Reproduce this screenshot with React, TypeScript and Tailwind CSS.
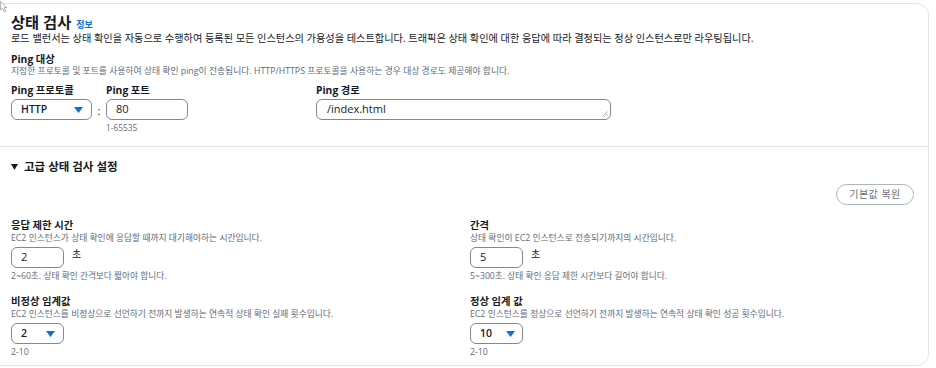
import React from "react";

const font = { fontFamily: '"Open Sans", "Noto Sans CJK KR", sans-serif' };

function Tri() {
  return (
    <svg width="9" height="6" viewBox="0 0 9 6" className="shrink-0">
      <path d="M0 0 H9 L4.5 6 Z" fill="#0972d3" />
    </svg>
  );
}

function Select({ value, w, gap }: { value: string; w: string; gap: string }) {
  return (
    <div className={`flex items-center h-[21px] ${w} rounded-[6px] border border-[#7d8998] pl-[9px] bg-white`}>
      <span className={`text-[10.5px] font-semibold text-[#16191f] ${gap}`}>{value}</span>
      <Tri />
    </div>
  );
}

function Field({
  label,
  desc,
  children,
  help,
}: {
  label: string;
  desc: string;
  children: React.ReactNode;
  help: string;
}) {
  return (
    <div className="flex flex-col">
      <div className="text-[10.3px] leading-[14px] font-bold text-[#16191f]">{label}</div>
      <div className="text-[8.75px] leading-[12px] text-[#5f6b7a]">{desc}</div>
      <div className="mt-[3px]">{children}</div>
      <div className="mt-[2px] text-[8.7px] leading-[12px] text-[#5f6b7a]">{help}</div>
    </div>
  );
}

function NumInput({ value }: { value: string }) {
  return (
    <div className="flex items-center gap-[8px]">
      <div className="flex items-center h-[21px] w-[53px] rounded-[6px] border border-[#7d8998] pl-[9px] bg-white text-[11px] text-[#16191f]">
        {value}
      </div>
      <span className="text-[10px] text-[#16191f] -mt-[6px]">초</span>
    </div>
  );
}

export default function App() {
  return (
    <div className="relative w-[936px] h-[368px] bg-white overflow-hidden" style={font}>
      <svg className="absolute left-0 top-[1px]" width="9" height="12" viewBox="0 0 9 12">
        <path d="M0.5 0.5 L0.5 9 L2.5 7 L4.5 11 L6 10.3 L4 6.5 L7 6.5 Z" fill="white" stroke="#9aa0a6" strokeWidth="0.8" />
      </svg>
      <div className="pt-[3px] pr-[7px]">
        <div className="ml-[-12px] h-[363px] rounded-[12px] border border-[#e3e6e8] bg-white flex flex-col">
          {/* section 1 */}
          <div className="pl-[22px] pr-[14px] pt-[9px] h-[143px] border-b border-[#e3e6e8]">
            <div className="flex items-baseline gap-[5px] h-[18px] leading-[18px]">
              <span className="text-[15.3px] font-bold text-[#16191f]">상태 검사</span>
              <span className="text-[9px] font-bold text-[#0972d3]">정보</span>
            </div>
            <div className="mt-0 text-[10.2px] leading-[14px] text-[#16191f]">
              로드 밸런서는 상태 확인을 자동으로 수행하여 등록된 모든 인스턴스의 가용성을 테스트합니다. 트래픽은 상태 확인에 대한 응답에 따라 결정되는 정상 인스턴스로만 라우팅됩니다.
            </div>
            <div className="mt-[7px] text-[10.3px] leading-[14px] font-bold text-[#16191f]">Ping 대상</div>
            <div className="text-[8.8px] leading-[11px] text-[#5f6b7a]">
              지정한 프로토콜 및 포트를 사용하여 상태 확인 ping이 전송됩니다. HTTP/HTTPS 프로토콜을 사용하는 경우 대상 경로도 제공해야 합니다.
            </div>
            <div className="mt-[6px] flex items-start">
              <div className="flex flex-col w-[81px]">
                <div className="text-[10.3px] leading-[14px] font-bold text-[#16191f]">Ping 프로토콜</div>
                <div className="mt-[2px]">
                  <Select value="HTTP" w="w-[81px]" gap="w-[53px]" />
                </div>
              </div>
              <div className="w-[14px] pt-[20px] text-center text-[11px] text-[#16191f]">:</div>
              <div className="flex flex-col w-[210px]">
                <div className="text-[10.3px] leading-[14px] font-bold text-[#16191f]">Ping 포트</div>
                <div className="mt-[2px] flex items-center h-[21px] w-[82px] rounded-[6px] border border-[#7d8998] pl-[9px] text-[11px] text-[#16191f]">
                  80
                </div>
                <div className="mt-[2px] text-[8.3px] leading-[12px] text-[#5f6b7a]">1-65535</div>
              </div>
              <div className="flex flex-col">
                <div className="text-[10.3px] leading-[14px] font-bold text-[#16191f]">Ping 경로</div>
                <div className="relative mt-[2px] flex items-center h-[21px] w-[295px] rounded-[6px] border border-[#7d8998] pl-[10px] text-[11px] text-[#16191f]">
                  /index.html
                  <svg className="absolute right-[2px] bottom-[2px]" width="6" height="6" viewBox="0 0 6 6">
                    <path d="M5.5 0.5 L0.5 5.5 M5.5 3 L3 5.5" stroke="#9aa0a6" strokeWidth="0.8" />
                  </svg>
                </div>
              </div>
            </div>
          </div>
          {/* section 2 */}
          <div className="pl-[22px] pr-[14px] pt-[12px]">
            <div className="flex items-center gap-[6px] h-[16px]">
              <svg width="7" height="6" viewBox="0 0 7 6">
                <path d="M0 0 H7 L3.5 6 Z" fill="#16191f" />
              </svg>
              <span className="text-[11.5px] font-bold text-[#16191f]">고급 상태 검사 설정</span>
            </div>
            <div className="flex justify-end mt-[9px]">
              <div className="h-[21px] w-[78px] rounded-full border border-[#aab7b8] flex items-center justify-center text-[10px] tracking-[0.5px] text-[#687078]">
                기본값 복원
              </div>
            </div>
            <div className="mt-[13px] grid grid-cols-[459px_1fr] gap-y-[12px]">
              <Field label="응답 제한 시간" desc="EC2 인스턴스가 상태 확인에 응답할 때까지 대기해야하는 시간입니다." help="2~60초. 상태 확인 간격보다 짧아야 합니다.">
                <NumInput value="2" />
              </Field>
              <Field label="간격" desc="상태 확인이 EC2 인스턴스로 전송되기까지의 시간입니다." help="5~300초. 상태 확인 응답 제한 시간보다 길어야 합니다.">
                <NumInput value="5" />
              </Field>
              <Field label="비정상 임계값" desc="EC2 인스턴스를 비정상으로 선언하기 전까지 발생하는 연속적 상태 확인 실패 횟수입니다." help="2-10">
                <Select value="2" w="w-[53px]" gap="w-[25px]" />
              </Field>
              <Field label="정상 임계 값" desc="EC2 인스턴스를 정상으로 선언하기 전까지 발생하는 연속적 상태 확인 성공 횟수입니다." help="2-10">
                <Select value="10" w="w-[53px]" gap="w-[26px]" />
              </Field>
            </div>
          </div>
        </div>
      </div>
    </div>
  );
}
